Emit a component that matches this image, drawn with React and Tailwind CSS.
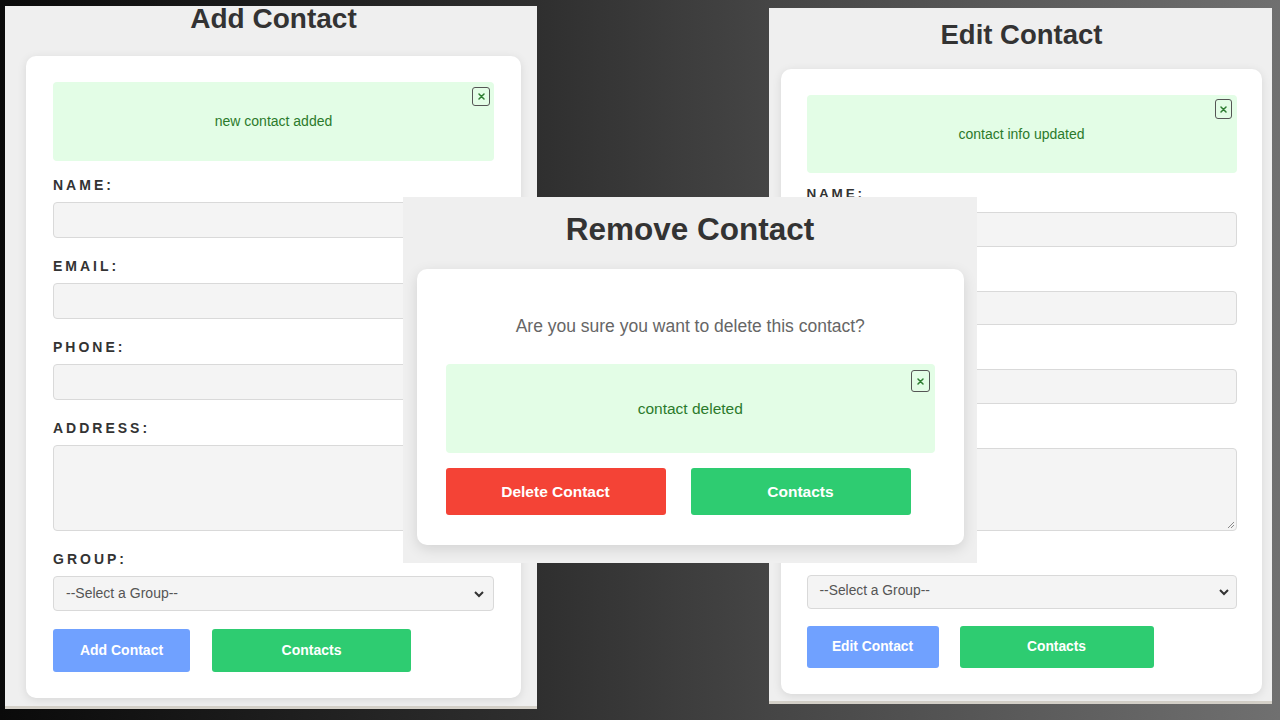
import React from 'react';

// sizes for the two form screenshots (left one is a bit larger than the right one)
const addForm = {
  panel: 'left-[5px] top-[6px] w-[532px] h-[703px] border-b-[3px]',
  wrap: 'ml-[21px] w-[495px] pt-[1px]',
  title: 'text-[28px] leading-[24px]',
  card: 'mt-[25px] h-[642px] px-[27px] pt-[26px]',
  notice: 'h-[79px] text-[14px]',
  close: 'right-[4px] top-[5px] w-[18px] h-[19px]',
  firstLabel: 'mt-[14px]',
  labelGap: 'mt-[18px]',
  label: 'h-[20px] text-[14px] leading-[20px] tracking-[3px]',
  gap: 'mt-[7px]',
  input: 'h-[36px]',
  area: 'h-[86px]',
  select: 'h-[35px] pl-[12px] pr-[6px] text-[14px]',
  row: 'mt-[18px] gap-[22px]',
  btnMain: 'w-[137px] h-[43px] text-[14px]',
  btnList: 'w-[199px] h-[43px] text-[14px]',
};

const editForm = {
  panel: 'left-[769px] top-[8px] w-[503px] h-[695.5px] border-b-[3px]',
  wrap: 'ml-[12px] w-[481px] pt-[15px]',
  title: 'text-[27.5px] leading-[24px]',
  card: 'mt-[22px] h-[624.5px] px-[25.5px] pt-[26px]',
  notice: 'h-[78px] text-[14px]',
  close: 'right-[5px] top-[4px] w-[16.5px] h-[20px]',
  firstLabel: 'mt-[11px]',
  labelGap: 'mt-[16px]',
  label: 'h-[20px] text-[13.5px] leading-[20px] tracking-[2.8px]',
  gap: 'mt-[8px]',
  input: 'h-[34.5px]',
  area: 'h-[83px]',
  select: 'h-[34.5px] pl-[12px] pr-[4px] text-[13.8px]',
  row: 'mt-[17px] gap-[21px]',
  btnMain: 'w-[132px] h-[42px] text-[13.8px]',
  btnList: 'w-[194px] h-[42px] text-[13.8px]',
};

function CloseBox({ className }) {
  return (
    <div className={`absolute flex items-center justify-center rounded-[3px] border border-[#555] ${className}`}>
      <svg width="7" height="7" viewBox="0 0 7 7">
        <path d="M1 1l5 5M6 1l-5 5" stroke="#2e7d32" strokeWidth="1.5" strokeLinecap="round" />
      </svg>
    </div>
  );
}

function Notice({ text, className, closeClass }) {
  return (
    <div className={`relative flex items-center justify-center rounded-[4px] bg-[#e3fde6] text-[#2b7a2b] ${className}`}>
      <span>{text}</span>
      <CloseBox className={closeClass} />
    </div>
  );
}

function ContactForm({ v, heading, notice, action, grip }) {
  const fields = ['Name', 'Email', 'Phone'];

  return (
    <div className={`absolute border-[#d4d0c8] bg-[#efefef] ${v.panel}`}>
      <div className={v.wrap}>
        <h1 className={`text-center font-bold text-[#333] ${v.title}`}>{heading}</h1>

        <div className={`rounded-[10px] bg-white shadow-[0_2px_10px_rgba(0,0,0,0.1)] ${v.card}`}>
          <Notice text={notice} className={v.notice} closeClass={v.close} />

          {fields.map((f, i) => (
            <div key={f}>
              <div className={`font-bold uppercase text-[#333] ${i === 0 ? v.firstLabel : v.labelGap} ${v.label}`}>
                {f}:
              </div>
              <div className={`rounded-[4px] border border-[#d9d9d9] bg-[#f4f4f4] ${v.gap} ${v.input}`} />
            </div>
          ))}

          {/* Address */}
          <div className={`font-bold uppercase text-[#333] ${v.labelGap} ${v.label}`}>Address:</div>
          <div className={`relative rounded-[4px] border border-[#d9d9d9] bg-[#f4f4f4] ${v.gap} ${v.area}`}>
            {grip && (
              <svg className="absolute bottom-[1px] right-[1px]" width="8" height="8" viewBox="0 0 8 8">
                <path d="M7 1L1 7M7 4L4 7" stroke="#8a8a8a" strokeWidth="1" />
              </svg>
            )}
          </div>

          {/* Group */}
          <div className={`font-bold uppercase text-[#333] ${v.labelGap} ${v.label}`}>Group:</div>
          <div className={`flex items-center justify-between rounded-[4px] border border-[#d9d9d9] bg-[#f4f4f4] text-[#555] ${v.gap} ${v.select}`}>
            <span>--Select a Group--</span>
            <svg width="16" height="10" viewBox="0 0 16 10">
              <path d="M4 3l4 4 4-4" fill="none" stroke="#333" strokeWidth="2" />
            </svg>
          </div>

          <div className={`flex ${v.row}`}>
            <button className={`rounded-[3px] bg-[#70a1ff] font-bold text-white ${v.btnMain}`}>{action}</button>
            <button className={`rounded-[3px] bg-[#2ecc71] font-bold text-white ${v.btnList}`}>Contacts</button>
          </div>
        </div>
      </div>
    </div>
  );
}

function RemoveContact() {
  return (
    <div className="absolute left-[403px] top-[197px] h-[366px] w-[574px] bg-[#efefef]">
      <h1 className="pt-[19px] text-center text-[31.5px] font-bold leading-[26px] text-[#333]">Remove Contact</h1>
      <div className="ml-[13.5px] mt-[27px] h-[275.5px] w-[547.5px] rounded-[10px] bg-white px-[29px] pt-[45px] shadow-[0_4px_14px_rgba(0,0,0,0.12)]">
        <p className="text-center text-[17.5px] leading-[24px] text-[#666]">
          Are you sure you want to delete this contact?
        </p>
        <Notice
          text="contact deleted"
          className="mt-[26px] h-[89px] text-[15.5px]"
          closeClass="right-[5px] top-[6px] w-[19px] h-[22px]"
        />
        <div className="mt-[15px] flex gap-[25px]">
          <button className="h-[47px] w-[220px] rounded-[3px] bg-[#f44336] text-[15.5px] font-bold text-white">
            Delete Contact
          </button>
          <button className="h-[47px] w-[220px] rounded-[3px] bg-[#2ecc71] text-[15.5px] font-bold text-white">
            Contacts
          </button>
        </div>
      </div>
    </div>
  );
}

export default function App() {
  return (
    <div className="relative h-[720px] w-[1280px] overflow-hidden bg-[linear-gradient(to_right,#0a0a0a,#2f2f2f_42%,#454545_60%,#707070)] font-['Liberation_Sans',Arial,sans-serif]">
      <ContactForm v={addForm} heading="Add Contact" notice="new contact added" action="Add Contact" />
      <ContactForm v={editForm} heading="Edit Contact" notice="contact info updated" action="Edit Contact" grip />
      <RemoveContact />
    </div>
  );
}
